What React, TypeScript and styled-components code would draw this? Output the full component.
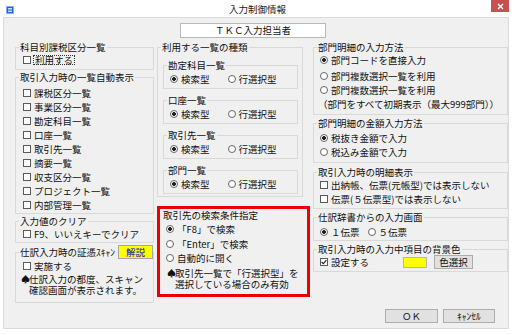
import React from "react";
import styled, { createGlobalStyle } from "styled-components";

const GlobalStyle = createGlobalStyle`
  html, body {
    margin: 0;
    padding: 0;
    background: #ffffff;
  }
  body {
    font-family: "Noto Sans CJK JP", "Noto Sans", sans-serif;
    font-size: 9.5px;
    color: #111111;
  }
`;

// 行の定義
type Item = { label: string; checked?: boolean };

const autoList: Item[] = [
  { label: "課税区分一覧" },
  { label: "事業区分一覧" },
  { label: "勘定科目一覧" },
  { label: "口座一覧" },
  { label: "取引先一覧" },
  { label: "摘要一覧" },
  { label: "収支区分一覧" },
  { label: "プロジェクト一覧" },
  { label: "内部管理一覧" },
];

const listKinds = ["勘定科目一覧", "口座一覧", "取引先一覧", "部門一覧"];

function AppIcon() {
  return (
    <svg width="8" height="8" viewBox="0 0 8 8">
      <rect x="0" y="0" width="8" height="8" fill="#1f63d6" />
      <rect x="0.5" y="0.5" width="7" height="7" fill="none" stroke="#7fb0ff" strokeWidth="1" />
      <path d="M2 2.5h4M2 4h4M2 5.5h4" stroke="#ffffff" strokeWidth="0.8" />
    </svg>
  );
}

function CloseIcon() {
  return (
    <svg width="7" height="7" viewBox="0 0 7 7">
      <path d="M1 1L6 6M6 1L1 6" stroke="#ffffff" strokeWidth="1.4" />
    </svg>
  );
}

function Check({ checked }: { checked?: boolean }) {
  return (
    <CheckBox>
      {checked && (
        <svg width="6" height="6" viewBox="0 0 6 6">
          <path d="M0.6 3L2.3 4.7L5.4 1.2" fill="none" stroke="#222" strokeWidth="1.1" />
        </svg>
      )}
    </CheckBox>
  );
}

function RadioOption({ label, checked }: { label: string; checked?: boolean }) {
  return (
    <Option>
      <Radio $checked={checked} />
      <span>{label}</span>
    </Option>
  );
}

export default function App() {
  return (
    <>
      <GlobalStyle />
      <Window>
        {/* タイトルバー */}
        <TitleBar>
          <IconCell>
            <AppIcon />
          </IconCell>
          <TitleText>入力制御情報</TitleText>
          <CloseButton>
            <CloseIcon />
          </CloseButton>
        </TitleBar>

        <Client>
          <HeaderRow>
            <NameField>ＴＫＣ入力担当者</NameField>
          </HeaderRow>

          <Columns>
            {/* 左列 */}
            <Column>
              <GroupBox $mt={9} $pb={2}>
                <Legend>
                  <LegendText>科目別課税区分一覧</LegendText>
                </Legend>
                <Body $pl={7}>
                  <Row>
                    <Check />
                    <FocusLabel>利用する</FocusLabel>
                  </Row>
                </Body>
              </GroupBox>

              <GroupBox $mt={7} $pb={1}>
                <Legend>
                  <LegendText>取引入力時の一覧自動表示</LegendText>
                </Legend>
                <Body $pl={7} $pt={3}>
                  {autoList.map((item) => (
                    <Row key={item.label}>
                      <Check checked={item.checked} />
                      <span>{item.label}</span>
                    </Row>
                  ))}
                </Body>
              </GroupBox>

              <GroupBox $mt={7} $pb={1}>
                <Legend>
                  <LegendText>入力値のクリア</LegendText>
                </Legend>
                <Body $pl={7}>
                  <Row>
                    <Check />
                    <span>F9、いいえキーでクリア</span>
                  </Row>
                </Body>
              </GroupBox>

              <GroupBox $mt={9} $pb={6}>
                <Legend $tall>
                  <LegendText>仕訳入力時の証憑ｽｷｬﾝ</LegendText>
                  <HelpButton>解説</HelpButton>
                </Legend>
                <Body $pl={7}>
                  <Row>
                    <Check />
                    <span>実施する</span>
                  </Row>
                  <Note $ml={-2} $mt={1}>
                    <Spade>♠</Spade>
                    <span>
                      仕訳入力の都度、スキャン
                      <br />
                      確認画面が表示されます。
                    </span>
                  </Note>
                </Body>
              </GroupBox>
            </Column>

            {/* 中央列 */}
            <Column>
              <OuterGroup $mt={9}>
                <Legend>
                  <LegendText>利用する一覧の種類</LegendText>
                </Legend>
                <Body $pl={5} $pr={4}>
                  {listKinds.map((kind, i) => (
                    <GroupBox key={kind} $mt={i === 0 ? 12 : 11} $pb={2}>
                      <Legend>
                        <LegendText>{kind}</LegendText>
                      </Legend>
                      <Body $pl={6} $pt={1}>
                        <OptionRow $gap={18}>
                          <RadioOption label="検索型" checked />
                          <RadioOption label="行選択型" />
                        </OptionRow>
                      </Body>
                    </GroupBox>
                  ))}
                </Body>
              </OuterGroup>

              <Highlight>
                <HighlightTitle>取引先の検索条件指定</HighlightTitle>
                <RadioList>
                  <RadioOption label="「F8」で検索" checked />
                  <RadioOption label="「Enter」で検索" />
                  <RadioOption label="自動的に開く" />
                </RadioList>
                <Note $ml={1} $mt={2}>
                  <Spade>♠</Spade>
                  <span>
                    取引先一覧で「行選択型」を
                    <br />
                    選択している場合のみ有効
                  </span>
                </Note>
              </Highlight>
            </Column>

            {/* 右列 */}
            <Column>
              <GroupBox $mt={9} $pb={3}>
                <Legend>
                  <LegendText>部門明細の入力方法</LegendText>
                </Legend>
                <Body $pl={6}>
                  <Row>
                    <RadioOption label="部門コードを直接入力" checked />
                  </Row>
                  <Row $mt={2}>
                    <RadioOption label="部門複数選択一覧を利用" />
                  </Row>
                  <Row>
                    <RadioOption label="部門複数選択一覧を利用" />
                  </Row>
                  <Row $ml={-2}>（部門をすべて初期表示（最大999部門））</Row>
                </Body>
              </GroupBox>

              <GroupBox $mt={8} $pb={3}>
                <Legend>
                  <LegendText>部門明細の金額入力方法</LegendText>
                </Legend>
                <Body $pl={6} $pt={2}>
                  <Row>
                    <RadioOption label="税抜き金額で入力" checked />
                  </Row>
                  <Row>
                    <RadioOption label="税込み金額で入力" />
                  </Row>
                </Body>
              </GroupBox>

              <GroupBox $mt={9} $pb={2}>
                <Legend>
                  <LegendText>取引入力時の明細表示</LegendText>
                </Legend>
                <Body $pl={6}>
                  <Row>
                    <Check />
                    <span>出納帳、伝票(元帳型)では表示しない</span>
                  </Row>
                  <Row>
                    <Check />
                    <span>伝票(５伝票型)では表示しない</span>
                  </Row>
                </Body>
              </GroupBox>

              <GroupBox $mt={8} $pb={1}>
                <Legend>
                  <LegendText>仕訳辞書からの入力画面</LegendText>
                </Legend>
                <Body $pl={6} $pt={2}>
                  <OptionRow $gap={8}>
                    <RadioOption label="１伝票" checked />
                    <RadioOption label="５伝票" />
                  </OptionRow>
                </Body>
              </GroupBox>

              <GroupBox $mt={8} $pb={2}>
                <Legend>
                  <LegendText>取引入力時の入力中項目の背景色</LegendText>
                </Legend>
                <Body $pl={6}>
                  <Row>
                    <Check checked />
                    <span>設定する</span>
                    <Swatch />
                    <PushButton $w={39}>色選択</PushButton>
                  </Row>
                </Body>
              </GroupBox>
            </Column>
          </Columns>

          <Footer>
            <PushButton $w={53}>ＯＫ</PushButton>
            <PushButton $w={52}>ｷｬﾝｾﾙ</PushButton>
          </Footer>
        </Client>
      </Window>
    </>
  );
}

const Window = styled.div`
  width: 512px;
  height: 335px;
  background: #ffffff;
  display: flex;
  flex-direction: column;
  overflow: hidden;
`;

const TitleBar = styled.div`
  height: 17px;
  display: grid;
  grid-template-columns: 1fr auto 1fr;
  padding: 0 3px 0 6px;
  box-sizing: border-box;
`;

const IconCell = styled.div`
  padding-top: 3px;
`;

const TitleText = styled.div`
  line-height: 18px;
  color: #1a1a1a;
`;

const CloseButton = styled.div`
  justify-self: end;
  width: 18px;
  height: 12px;
  background: #c75050;
  display: flex;
  align-items: center;
  justify-content: center;
`;

const Client = styled.div`
  margin: 0 3px;
  height: 312px;
  box-sizing: border-box;
  border: 1px solid #dadada;
  background: #f0f0f0;
  display: flex;
  flex-direction: column;
`;

const HeaderRow = styled.div`
  padding-left: 176px;
  margin-top: 5px;
`;

const NameField = styled.div`
  width: 146px;
  height: 15px;
  box-sizing: border-box;
  border: 1px solid #b9b9b9;
  background: #ffffff;
  text-align: center;
  line-height: 13px;
`;

const Columns = styled.div`
  display: grid;
  grid-template-columns: 139px 153px 195px;
  column-gap: 3px;
  padding-left: 11px;
  align-items: start;
`;

const Column = styled.div`
  display: flex;
  flex-direction: column;
`;

const GroupBox = styled.div<{ $mt: number; $pb?: number }>`
  margin-top: ${(p) => p.$mt}px;
  border: 1px solid #d9d9d9;
  padding-bottom: ${(p) => p.$pb ?? 2}px;
`;

const OuterGroup = styled(GroupBox)`
  margin-right: 7px;
`;

const Legend = styled.div<{ $tall?: boolean }>`
  display: flex;
  align-items: center;
  justify-content: space-between;
  height: ${(p) => (p.$tall ? 14 : 12)}px;
  margin: ${(p) => (p.$tall ? -8 : -7)}px 0 0 3px;
`;

const LegendText = styled.span`
  background: #f0f0f0;
  padding: 0 1px;
  line-height: 12px;
  white-space: nowrap;
`;

const Body = styled.div<{ $pl?: number; $pr?: number; $pt?: number }>`
  padding: ${(p) => p.$pt ?? 0}px ${(p) => p.$pr ?? 0}px 0 ${(p) => p.$pl ?? 0}px;
`;

const Row = styled.div<{ $mt?: number; $ml?: number }>`
  display: flex;
  align-items: center;
  gap: 3px;
  height: 14px;
  white-space: nowrap;
  margin-top: ${(p) => p.$mt ?? 0}px;
  margin-left: ${(p) => p.$ml ?? 0}px;
`;

const CheckBox = styled.span`
  width: 8px;
  height: 8px;
  box-sizing: border-box;
  border: 1px solid #5a5a5a;
  background: #ffffff;
  flex: none;
  display: flex;
  align-items: center;
  justify-content: center;
`;

const Radio = styled.span<{ $checked?: boolean }>`
  width: 8px;
  height: 8px;
  box-sizing: border-box;
  border: 1px solid #666666;
  border-radius: 50%;
  flex: none;
  background: ${(p) =>
    p.$checked
      ? "radial-gradient(circle, #222 0 1.6px, #fff 2.2px)"
      : "#ffffff"};
`;

const FocusLabel = styled.span`
  outline: 1px dotted #333333;
  outline-offset: 0;
  line-height: 8px;
  padding: 0 1px;
`;

const Option = styled.span`
  display: flex;
  align-items: center;
  gap: 3px;
  height: 14px;
  white-space: nowrap;
`;

const OptionRow = styled.div<{ $gap: number }>`
  display: flex;
  gap: ${(p) => p.$gap}px;
`;

const Note = styled.div<{ $ml: number; $mt: number }>`
  display: flex;
  margin-top: ${(p) => p.$mt}px;
  margin-left: ${(p) => p.$ml}px;
  line-height: 11px;
  white-space: nowrap;
`;

const Spade = styled.span`
  width: 8px;
  flex: none;
  font-size: 9px;
`;

const HelpButton = styled.span`
  width: 35px;
  height: 14px;
  box-sizing: border-box;
  border: 1px solid #a6a6a6;
  background: #ffff00;
  color: #0000d0;
  text-align: center;
  line-height: 12px;
`;

const Highlight = styled.div`
  margin-top: 9px;
  border: 3px solid #ee0000;
  padding: 0 0 4px 6px;
`;

const HighlightTitle = styled.div`
  line-height: 12px;
  margin-left: -3px;
`;

const RadioList = styled.div`
  display: flex;
  flex-direction: column;
  margin-top: 1px;
  & > span {
    height: 14.5px;
  }
`;

const Swatch = styled.span`
  width: 24px;
  height: 11px;
  box-sizing: border-box;
  background: #ffff00;
  border: 1px solid #b5b5b5;
  margin-left: 31px;
  flex: none;
`;

const PushButton = styled.span<{ $w: number }>`
  width: ${(p) => p.$w}px;
  height: 14px;
  box-sizing: border-box;
  border: 1px solid #adadad;
  background: #e1e1e1;
  text-align: center;
  line-height: 12px;
  margin-left: 4px;
  flex: none;
`;

const Footer = styled.div`
  display: flex;
  justify-content: flex-end;
  gap: 1px;
  padding-right: 13px;
  margin-top: 6px;
`;
